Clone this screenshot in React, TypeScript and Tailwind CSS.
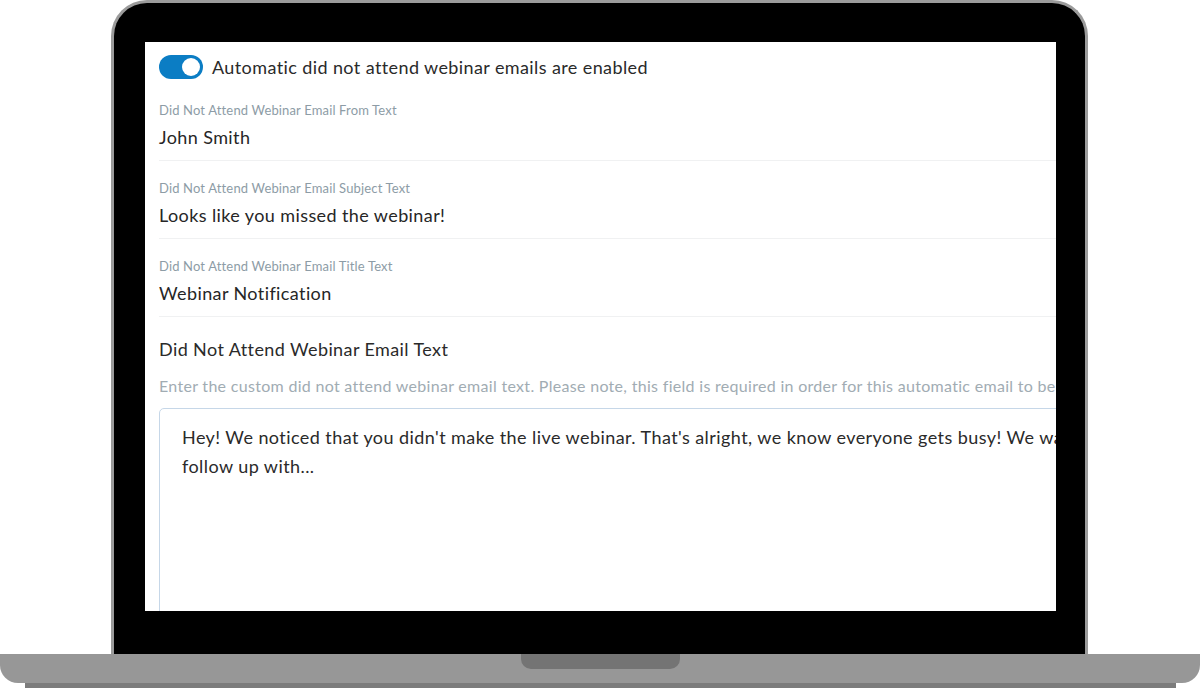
import React from "react";

const fields = [
  { label: "Did Not Attend Webinar Email From Text", value: "John Smith" },
  { label: "Did Not Attend Webinar Email Subject Text", value: "Looks like you missed the webinar!" },
  { label: "Did Not Attend Webinar Email Title Text", value: "Webinar Notification" },
];

const Toggle = () => (
  <div className="relative h-[24px] w-[44px] shrink-0 rounded-full bg-[#0b7dc4]">
    <div className="absolute right-[3px] top-[3px] h-[18px] w-[18px] rounded-full bg-white" />
  </div>
);

const Screen = () => (
  <div className="h-[569px] w-[911px] overflow-hidden bg-white pl-[14px] pt-[13px] font-['Lato',sans-serif] text-[#262626]">
    <div className="w-[1100px]">
      <div className="flex h-[24px] items-center gap-[9px]">
        <Toggle />
        <span className="text-[18px] leading-[24px] tracking-[0.4px] text-[#2a2a2a]">
          Automatic did not attend webinar emails are enabled
        </span>
      </div>
      <div className="mt-[4px] w-[897px]">
        {fields.map((f) => (
          <div key={f.label} className="border-b border-[#f0f1f2] pt-[19px] pb-[11px]">
            <div className="text-[13px] leading-[16px] tracking-[0.15px] text-[#8d9ca6]">{f.label}</div>
            <div className="mt-[7px] text-[18px] leading-[24px] tracking-[0.4px]">{f.value}</div>
          </div>
        ))}
      </div>
      <div className="mt-[20px] text-[18px] leading-[24px] tracking-[0.4px] text-[#2a2a2a]">
        Did Not Attend Webinar Email Text
      </div>
      <div className="mt-[15px] whitespace-nowrap text-[16px] leading-[20px] tracking-[0.3px] text-[#a1acb3]">
        Enter the custom did not attend webinar email text. Please note, this field is required in order for this automatic email to be sent.
      </div>
      <div className="mt-[12px] h-[240px] rounded-[5px] border border-[#c6d7e8] pl-[22px] pt-[14px] text-[18px] leading-[29px] tracking-[0.43px] text-[#2a2a2a]">
        <div className="whitespace-nowrap">
          Hey! We noticed that you didn't make the live webinar. That's alright, we know everyone gets busy! We wanted to
        </div>
        <div className="whitespace-nowrap">follow up with...</div>
      </div>
    </div>
  </div>
);

export default function App() {
  return (
    <div className="h-[688px] w-[1200px] overflow-hidden bg-white">
      <div className="ml-[111px] h-[654px] w-[977px] rounded-t-[36px] border-x-[3px] border-t-[3px] border-[#9b9b9b] bg-black pl-[31px] pt-[39px]">
        <Screen />
      </div>
      <div className="relative h-[29px] w-full rounded-b-[18px] bg-[#979797]">
        <div className="absolute left-[521px] top-0 h-[15px] w-[159px] rounded-b-[10px] bg-[#747474]" />
      </div>
      <div className="ml-[25px] h-[5px] w-[1151px] bg-[#7c7c7c]" />
    </div>
  );
}
